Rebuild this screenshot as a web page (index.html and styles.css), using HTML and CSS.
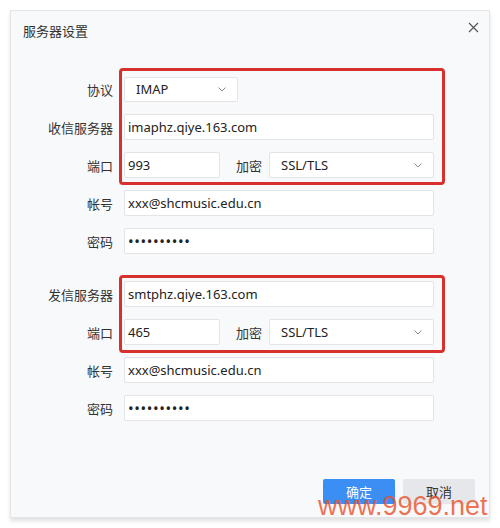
FILE: index.html
```html
<!DOCTYPE html>
<html lang="zh-CN">
<head>
  <meta charset="UTF-8">
  <meta name="viewport" content="width=device-width, initial-scale=1">
  <title>服务器设置</title>
  <link rel="stylesheet" href="styles.css">
</head>
<body>
  <div class="dialog">
    <div class="dialog-head">
      <span class="dialog-title">服务器设置</span>
      <button class="close-btn" aria-label="关闭">
        <svg width="11" height="11" viewBox="0 0 11 11"><path d="M1 1L10 10M10 1L1 10" stroke="#555" stroke-width="1.2" fill="none"/></svg>
      </button>
    </div>

    <!-- 收信 -->
    <div class="section">
      <div class="mark mark-in"></div>

      <div class="row">
        <label class="row-label">协议</label>
        <div class="select select-short">
          <span>IMAP</span>
          <svg class="chevron" width="8" height="5" viewBox="0 0 8 5"><path d="M0.5 0.5L4 4L7.5 0.5" stroke="#888" stroke-width="1" fill="none"/></svg>
        </div>
      </div>

      <div class="row">
        <label class="row-label">收信服务器</label>
        <input class="text-input" type="text" value="imaphz.qiye.163.com" readonly>
      </div>

      <div class="row">
        <label class="row-label">端口</label>
        <input class="text-input port-input" type="text" value="993" readonly>
        <label class="inline-label">加密</label>
        <div class="select select-wide">
          <span>SSL/TLS</span>
          <svg class="chevron" width="8" height="5" viewBox="0 0 8 5"><path d="M0.5 0.5L4 4L7.5 0.5" stroke="#888" stroke-width="1" fill="none"/></svg>
        </div>
      </div>

      <div class="row">
        <label class="row-label">帐号</label>
        <input class="text-input" type="text" value="xxx@shcmusic.edu.cn" readonly>
      </div>

      <div class="row">
        <label class="row-label">密码</label>
        <input class="text-input pass-input" type="password" value="1234567890" readonly>
      </div>
    </div>

    <!-- 发信 -->
    <div class="section section-out">
      <div class="mark mark-out"></div>

      <div class="row">
        <label class="row-label">发信服务器</label>
        <input class="text-input" type="text" value="smtphz.qiye.163.com" readonly>
      </div>

      <div class="row">
        <label class="row-label">端口</label>
        <input class="text-input port-input" type="text" value="465" readonly>
        <label class="inline-label">加密</label>
        <div class="select select-wide">
          <span>SSL/TLS</span>
          <svg class="chevron" width="8" height="5" viewBox="0 0 8 5"><path d="M0.5 0.5L4 4L7.5 0.5" stroke="#888" stroke-width="1" fill="none"/></svg>
        </div>
      </div>

      <div class="row">
        <label class="row-label">帐号</label>
        <input class="text-input" type="text" value="xxx@shcmusic.edu.cn" readonly>
      </div>

      <div class="row">
        <label class="row-label">密码</label>
        <input class="text-input pass-input" type="password" value="1234567890" readonly>
      </div>
    </div>

    <div class="dialog-foot">
      <button class="btn btn-ok">确定</button>
      <button class="btn btn-cancel">取消</button>
    </div>

    <div class="watermark">www.9969.net</div>
  </div>
</body>
</html>
```

FILE: styles.css
```css
body {
  margin: 0;
  background: #fff;
  font-family: "Noto Sans", "Noto Sans CJK SC", sans-serif;
  color: #333;
}

.dialog {
  position: relative;
  box-sizing: border-box;
  width: 480px;
  height: 508px;
  margin: 10px;
  background: #f8f9fb;
  border: 1px solid #e3e5e8;
  box-shadow: 0 3px 4px rgba(0,0,0,0.12);
  display: flex;
  flex-direction: column;
}

.dialog-head {
  display: flex;
  justify-content: space-between;
  align-items: center;
  height: 38px;
  padding: 0 10px 0 12px;
}

.dialog-title {
  font-family: "Noto Sans CJK SC", sans-serif;
  font-size: 13px;
  color: #333;
  margin-top: 1px;
}

.close-btn {
  border: none;
  background: none;
  padding: 0;
  margin-top: -6px;
  width: 11px;
  height: 11px;
  display: flex;
}

.section {
  position: relative;
  margin-top: 27px;
  display: flex;
  flex-direction: column;
  gap: 12px;
}

.mark {
  position: absolute;
  left: 108px;
  width: 326px;
  box-sizing: border-box;
  border: 3px solid #d8302c;
  border-radius: 4px;
  pointer-events: none;
}

.mark-in {
  top: -8px;
  height: 117px;
}

.mark-out {
  top: -6px;
  height: 78px;
}

.row {
  display: flex;
  align-items: center;
  height: 26px;
}

.row-label {
  width: 102px;
  margin-right: 11px;
  text-align: right;
  font-family: "Noto Sans CJK SC", sans-serif;
  font-size: 13px;
  color: #333;
}

.inline-label {
  margin: 0 7px 0 16px;
  font-family: "Noto Sans CJK SC", sans-serif;
  font-size: 13px;
  color: #333;
}

.text-input,
.select {
  box-sizing: border-box;
  height: 26px;
  background: #fff;
  border: 1px solid #e2e4e8;
  border-radius: 2px;
  font-family: "Noto Sans", sans-serif;
  font-size: 13px;
  color: #222;
}

.text-input {
  width: 310px;
  padding: 0 3px;
  outline: none;
}

.port-input {
  width: 96px;
}

.pass-input {
  font-size: 15px;
  letter-spacing: 0.6px;
}

.select {
  display: flex;
  align-items: center;
  justify-content: space-between;
  padding: 0 11px 0 11px;
}

.select-short {
  width: 114px;
  height: 25px;
}

.select-wide {
  width: 165px;
}

.chevron {
  margin-top: 1px;
}

.dialog-foot {
  margin-top: auto;
  display: flex;
  justify-content: flex-end;
  gap: 8px;
  padding: 0 14px 13px 0;
}

.btn {
  width: 72px;
  height: 25px;
  border: none;
  border-radius: 2px;
  font-family: "Noto Sans CJK SC", sans-serif;
  font-size: 13px;
}

.btn-ok {
  background: #3b8ef3;
  color: #fff;
}

.btn-cancel {
  background: #e5e7ea;
  color: #333;
}

.watermark {
  position: absolute;
  left: 307px;
  top: 480px;
  font-family: "Liberation Sans", Arial, sans-serif;
  font-size: 27px;
  line-height: 30px;
  color: rgba(232, 84, 44, 0.82);
  pointer-events: none;
}
```
